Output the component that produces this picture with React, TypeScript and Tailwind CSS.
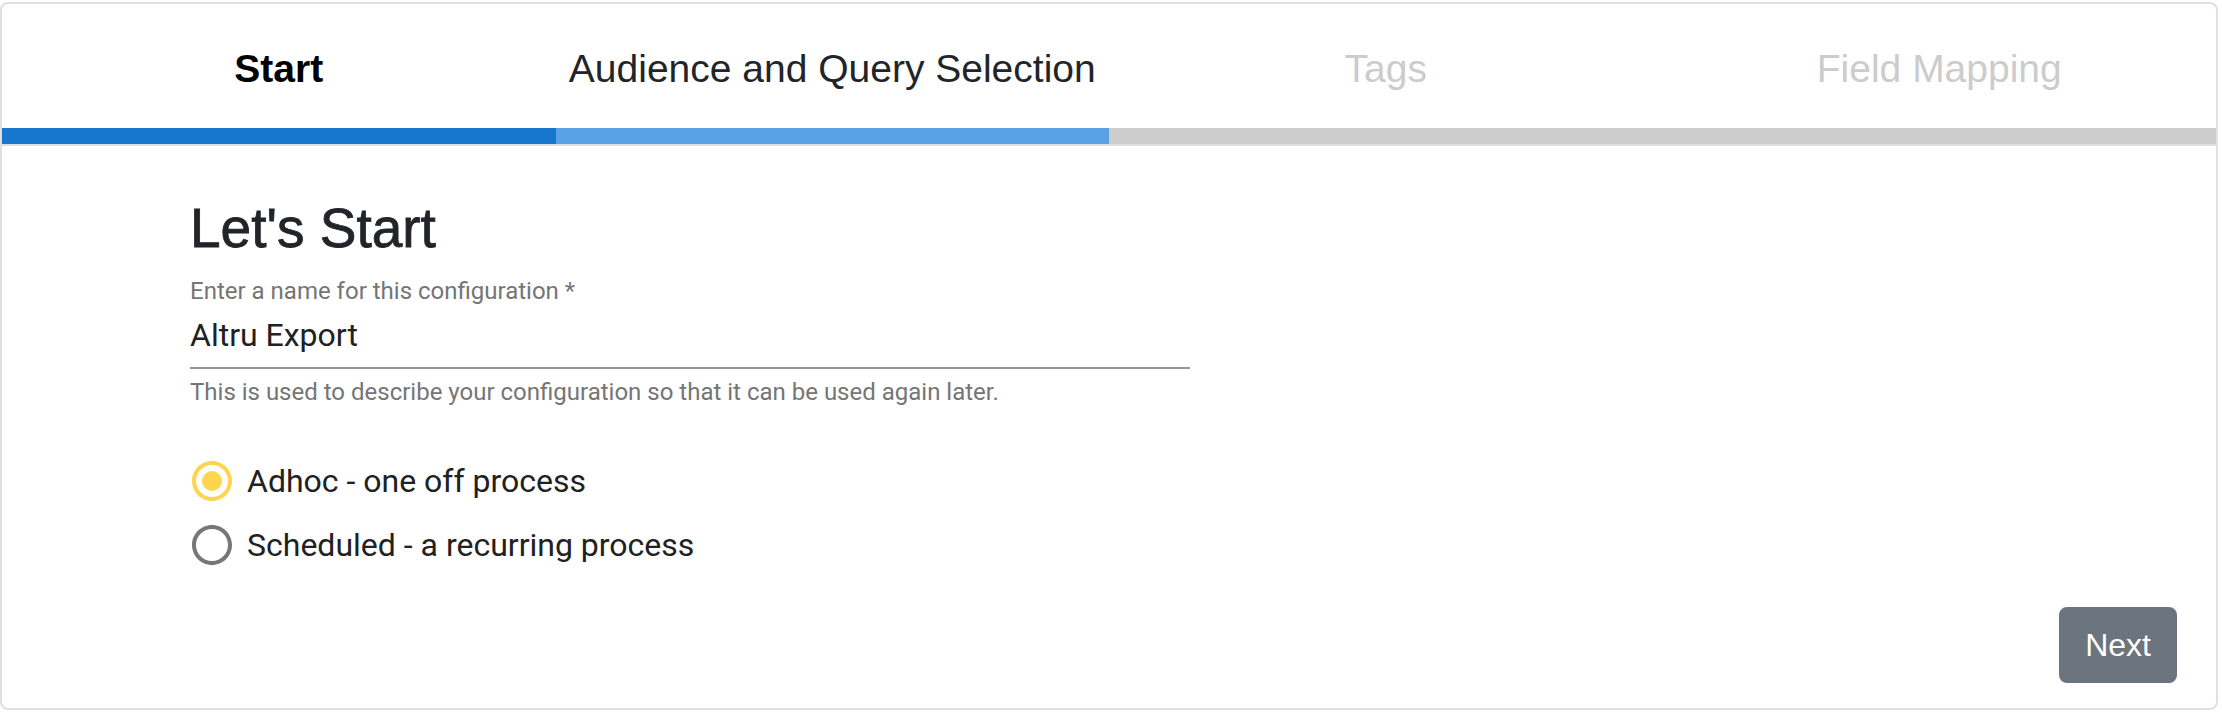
import React from "react";

const sans = { fontFamily: '"Liberation Sans", Arial, Helvetica, sans-serif' };

function RadioIcon({ checked }: { checked: boolean }) {
  const color = checked ? "#fdd54f" : "#777777";
  return (
    <svg width="48" height="48" viewBox="0 0 24 24" className="shrink-0 -ml-[2px]">
      <path
        fill={color}
        d="M12 2C6.48 2 2 6.48 2 12s4.48 10 10 10 10-4.48 10-10S17.52 2 12 2zm0 18c-4.42 0-8-3.58-8-8s3.58-8 8-8 8 3.58 8 8-3.58 8-8 8z"
      />
      {checked && <circle cx="12" cy="12" r="5" fill={color} />}
    </svg>
  );
}

export default function App() {
  return (
    <div className="w-[2222px] h-[714px] bg-white pt-[2px]">
      <div className="w-[2218px] h-[708px] border-2 border-[#e0e0e0] rounded-[8px] flex flex-col overflow-hidden bg-white">
        {/* Tabs */}
        <div
          className="grid grid-cols-4 h-[124px] pt-[5px] items-center text-center text-[39px] leading-[44px]"
          style={sans}
        >
          <div className="font-bold text-black">Start</div>
          <div className="text-[#212529]">Audience and Query Selection</div>
          <div className="text-[#cccccc]">Tags</div>
          <div className="text-[#cccccc]">Field Mapping</div>
        </div>
        {/* Progress bar */}
        <div className="grid grid-cols-4 h-[16px]">
          <div className="bg-[#1777cf]" />
          <div className="bg-[#58a1e3]" />
          <div className="col-span-2 bg-[#cccccc]" />
        </div>
        <div className="h-[2px] bg-[#dedede]" />

        {/* Body */}
        <div className="flex-1 flex flex-col">
          <div className="pl-[188px] flex flex-col" style={{ fontFamily: 'Roboto, "Liberation Sans", sans-serif' }}>
            <h1
              className="mt-[50px] text-[55px] leading-[64px] font-medium text-[#212529] [-webkit-text-stroke:0.8px_#212529]"
              style={sans}
            >
              Let's Start
            </h1>
            <label className="mt-[19px] text-[24px] leading-[24px] text-[#757575]">
              Enter a name for this configuration *
            </label>
            <div className="mt-[13px] w-[1000px] pb-[13px] border-b-2 border-[#949494] text-[32px] leading-[38px] text-[#212121]">
              Altru Export
            </div>
            <p className="mt-[11px] text-[24px] leading-[24px] text-[#757575]">
              This is used to describe your configuration so that it can be used again later.
            </p>
            <div className="mt-[45px] flex flex-col">
              <div className="h-[64px] flex items-center gap-[11px]">
                <RadioIcon checked />
                <span className="text-[32px] leading-[38px] text-[#212121]">Adhoc - one off process</span>
              </div>
              <div className="h-[64px] flex items-center gap-[11px]">
                <RadioIcon checked={false} />
                <span className="text-[32px] leading-[38px] text-[#212121]">Scheduled - a recurring process</span>
              </div>
            </div>
          </div>
          <div className="mt-auto flex justify-end pr-[39px] pb-[25px]">
            <button
              className="bg-[#6c757d] border-2 border-[#6c757d] text-white text-[32px] leading-[48px] px-[24px] py-[12px] rounded-[8px]"
              style={sans}
            >
              Next
            </button>
          </div>
        </div>
      </div>
    </div>
  );
}
